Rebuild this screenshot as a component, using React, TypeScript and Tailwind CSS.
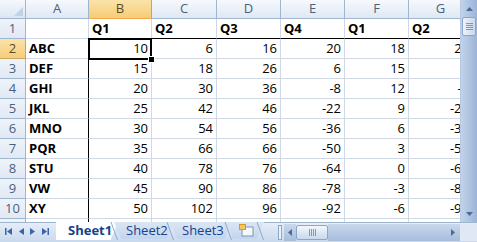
import React from "react";

const cols = ["A", "B", "C", "D", "E", "F", "G"];
const widths = [63, 63, 65, 64, 64, 64, 64];
const labels = ["ABC", "DEF", "GHI", "JKL", "MNO", "PQR", "STU", "VW", "XY"];
const header = ["", "Q1", "Q2", "Q3", "Q4", "Q1", "Q2"];

function rowVals(i: number) {
  return [10 + 5 * i, 6 + 12 * i, 16 + 10 * i, 20 - 14 * i, 18 - 3 * i, 24 - 15 * i];
}

function Slant() {
  return (
    <svg className="absolute right-0 top-0" width="8" height="18" viewBox="0 0 8 18">
      <path d="M1 0 L7.5 18" stroke="#8ea8cc" strokeWidth="1" fill="none" />
    </svg>
  );
}

export default function App() {
  const rows: React.ReactNode[] = [];
  rows.push(
    <div key="h" className="flex h-[19px]">
      <div className="w-[26px] shrink-0 border-r border-b border-[#9eb6ce] bg-gradient-to-b from-[#f5f8fc] to-[#dce6f3] relative">
        <div className="absolute right-[2px] bottom-[2px] w-0 h-0 border-l-[9px] border-l-transparent border-b-[9px] border-b-[#c2d2e6]" />
      </div>
      {cols.map((c, ci) => (
        <div
          key={c}
          style={{ width: widths[ci] }}
          className={
            "shrink-0 border-r border-b flex items-center justify-center text-[13px] " +
            (ci === 1
              ? "bg-gradient-to-b from-[#fbe3a9] to-[#f6cc78] border-[#c4a764] border-b-[#f2a94a] text-[#5b4a2a]"
              : "bg-gradient-to-b from-[#f6f9fd] to-[#dfe8f4] border-[#9eb6ce] text-[#4b5f7c]")
          }
        >
          {c}
        </div>
      ))}
    </div>
  );
  for (let r = 1; r <= 11; r++) {
    const isHdr = r === 1;
    const vals = r >= 2 ? rowVals(r - 2) : [];
    rows.push(
      <div key={r} className="flex h-[20px] shrink-0">
        <div
          className={
            "w-[26px] shrink-0 border-r border-b flex items-center justify-center text-[13px] " +
            (r === 2
              ? "bg-gradient-to-b from-[#fbe3a9] to-[#f6cc78] border-[#c4a764] text-[#5b4a2a]"
              : "bg-gradient-to-b from-[#eef3fa] to-[#e1e9f5] border-[#9eb6ce] text-[#4b5f7c]")
          }
        >
          {r}
        </div>
        {cols.map((c, ci) => {
          let content: React.ReactNode = "";
          let cls = "";
          if (isHdr) {
            content = header[ci];
            cls = "justify-start pl-[3px] font-bold";
          } else if (r <= 10) {
            if (ci === 0) {
              content = labels[r - 2];
              cls = "justify-start pl-[3px] font-bold";
            } else {
              content = String(vals[ci - 1]);
              cls = "justify-end pr-[3px]";
            }
          }
          const rightBorder = ci === 0 && r >= 2 ? "border-r-black" : "border-r-[#d0d7e5]";
          const bottomBorder = isHdr && ci >= 1 ? "border-b-black" : "border-b-[#d0d7e5]";
          return (
            <div
              key={c}
              style={{ width: widths[ci] }}
              className={
                "shrink-0 border-r border-b flex items-center text-[13px] text-black overflow-hidden whitespace-nowrap relative " +
                rightBorder +
                " " +
                bottomBorder +
                " " +
                cls
              }
            >
              {content}
            </div>
          );
        })}
      </div>
    );
  }

  return (
    <div
      className="w-[477px] h-[242px] flex flex-col bg-white overflow-hidden"
      style={{ fontFamily: '"Open Sans", "Liberation Sans", sans-serif' }}
    >
      <div className="flex h-[222px] shrink-0">
        <div className="w-[460px] h-[222px] overflow-hidden relative">
          <div className="flex flex-col w-[600px]">{rows}</div>
          <div className="absolute left-[88px] top-[38px] w-[64px] h-[22px] border-2 border-black pointer-events-none" />
          <div className="absolute left-[148px] top-[56px] w-[7px] h-[7px] bg-black border border-white" />
        </div>
        <div className="w-[17px] h-[222px] flex flex-col bg-gradient-to-r from-[#c2d3ea] to-[#9db4d8] border-l border-[#b7c9e2]">
          <div className="h-[17px] flex items-center justify-center">
            <svg width="7" height="4" viewBox="0 0 7 4">
              <path d="M0 4 L3.5 0 L7 4 Z" fill="#4a6a98" />
            </svg>
          </div>
          <div className="h-[19px] mx-[1px] rounded-[2px] border border-[#8aa6cc] bg-gradient-to-r from-[#eef3fa] to-[#c9d8ec] flex flex-col items-center justify-center gap-[1px]">
            <div className="w-[7px] h-[1px] bg-[#7f97bd]" />
            <div className="w-[7px] h-[1px] bg-[#7f97bd]" />
            <div className="w-[7px] h-[1px] bg-[#7f97bd]" />
            <div className="w-[7px] h-[1px] bg-[#7f97bd]" />
          </div>
          <div className="flex-1" />
          <div className="h-[17px] flex items-center justify-center">
            <svg width="7" height="4" viewBox="0 0 7 4">
              <path d="M0 0 L3.5 4 L7 0 Z" fill="#4a6a98" />
            </svg>
          </div>
        </div>
      </div>
      <div className="h-[20px] flex items-start bg-gradient-to-b from-[#e5edf8] to-[#c9d9ee] border-t border-[#9eb6ce] relative">
        <div className="flex items-center gap-[6px] h-[17px] pl-[5px] w-[56px]">
          <svg width="8" height="7" viewBox="0 0 8 7"><rect x="0" y="0" width="1.5" height="7" fill="#3b65a8" /><path d="M7 0 L2 3.5 L7 7Z" fill="#3b65a8" /></svg>
          <svg width="5" height="7" viewBox="0 0 5 7"><path d="M5 0 L0 3.5 L5 7Z" fill="#3b65a8" /></svg>
          <svg width="5" height="7" viewBox="0 0 5 7"><path d="M0 0 L5 3.5 L0 7Z" fill="#3b65a8" /></svg>
          <svg width="8" height="7" viewBox="0 0 8 7"><path d="M1 0 L6 3.5 L1 7Z" fill="#3b65a8" /><rect x="6.5" y="0" width="1.5" height="7" fill="#3b65a8" /></svg>
        </div>
        <div className="flex items-start -mt-[1px] h-[19px]">
          <div className="relative h-[18px] w-[62px]">
            <div className="h-[18px] w-[62px] bg-white [clip-path:polygon(0_0,100%_0,88%_100%,0_100%)] flex items-center pl-[12px] text-[13px] font-bold text-[#15428b]">
              Sheet1
            </div>
            <Slant />
          </div>
          <div className="relative h-[18px] w-[60px] -ml-[4px]">
            <div className="h-[17px] w-[60px] bg-gradient-to-b from-[#dbe6f4] to-[#c3d5ec] [clip-path:polygon(0_0,100%_0,88%_100%,12%_100%)] flex items-center pl-[12px] text-[13px] text-[#15428b]">
              Sheet2
            </div>
            <Slant />
          </div>
          <div className="relative h-[18px] w-[62px] -ml-[4px]">
            <div className="h-[17px] w-[62px] bg-gradient-to-b from-[#dbe6f4] to-[#c3d5ec] [clip-path:polygon(0_0,100%_0,88%_100%,12%_100%)] flex items-center pl-[12px] text-[13px] text-[#15428b]">
              Sheet3
            </div>
            <Slant />
          </div>
          <div className="relative h-[18px] w-[36px] -ml-[4px]">
            <div className="h-[17px] w-[36px] bg-gradient-to-b from-[#dbe6f4] to-[#c3d5ec] [clip-path:polygon(0_0,100%_0,80%_100%,12%_100%)] flex items-center pl-[11px]">
              <svg width="16" height="13" viewBox="0 0 16 13">
                <rect x="3" y="3" width="11" height="9" fill="#f4f7fb" stroke="#7e95b8" />
                <rect x="0.5" y="0.5" width="6" height="5" fill="#f5c65a" stroke="#d59a2a" />
              </svg>
            </div>
            <Slant />
          </div>
        </div>
        <div className="absolute left-[276px] top-[1px] w-[201px] h-[17px] flex items-center">
          <div className="w-[4px] h-[15px] mx-[2px] border border-[#8aa6cc] bg-[#eef3fa]" />
          <div className="w-[12px] h-[17px] bg-gradient-to-b from-[#c9d8ec] to-[#a6bddc] flex items-center justify-center">
            <svg width="4" height="7" viewBox="0 0 4 7"><path d="M4 0 L0 3.5 L4 7Z" fill="#4a6a98" /></svg>
          </div>
          <div className="w-[32px] h-[15px] rounded-[2px] border border-[#8aa6cc] bg-gradient-to-b from-[#f3f7fc] to-[#c9d8ec] flex items-center justify-center gap-[1px]">
            <div className="w-[1px] h-[7px] bg-[#7f97bd]" />
            <div className="w-[1px] h-[7px] bg-[#7f97bd]" />
            <div className="w-[1px] h-[7px] bg-[#7f97bd]" />
            <div className="w-[1px] h-[7px] bg-[#7f97bd]" />
          </div>
          <div className="flex-1 h-[17px] bg-gradient-to-b from-[#c9d8ec] to-[#a6bddc]" />
          <div className="w-[14px] h-[17px] bg-gradient-to-b from-[#c9d8ec] to-[#a6bddc] flex items-center justify-center">
            <svg width="4" height="7" viewBox="0 0 4 7"><path d="M0 0 L4 3.5 L0 7Z" fill="#4a6a98" /></svg>
          </div>
          <div className="w-[17px] h-[17px] bg-[#dfe8f4]" />
        </div>
      </div>
    </div>
  );
}
